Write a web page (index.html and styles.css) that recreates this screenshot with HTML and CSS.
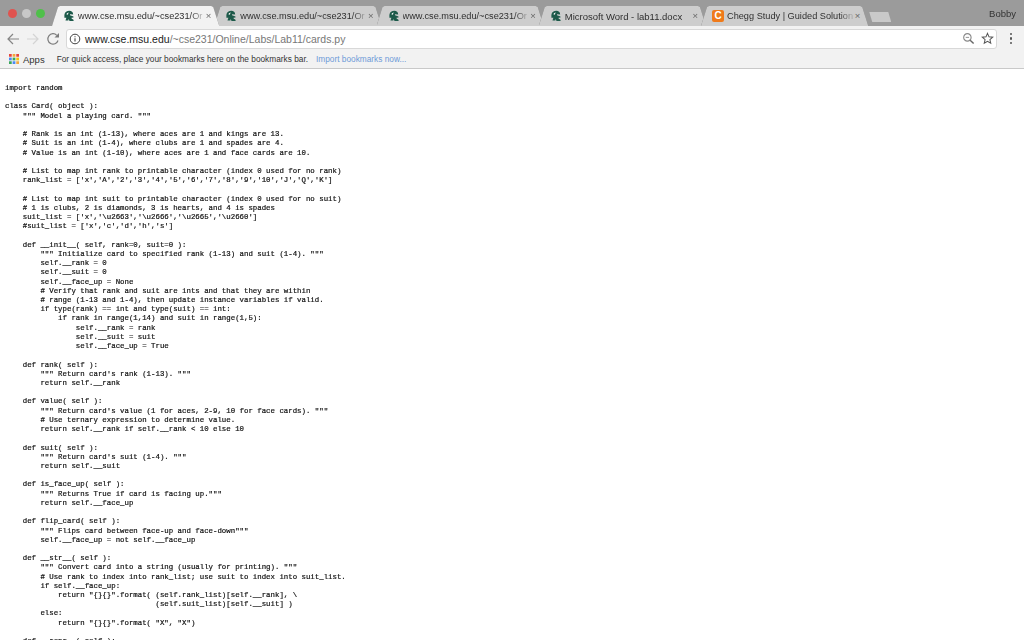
FILE: index.html
```html
<!DOCTYPE html>
<html lang="en">
<head>
<meta charset="utf-8">
<title>cards.py</title>
<link rel="stylesheet" href="styles.css">
</head>
<body>
<svg class="defs" width="0" height="0" aria-hidden="true">
  <symbol id="spartan" viewBox="0 0 16 16">
    <path fill="#1d5a4a" d="M8.5 1C5 1 2.6 3 2 5.6c-.4 1.7-.2 3.3.1 4.9.9-.2 1.7-.3 2.4-.1L3.300 14h3.900l.5-2.300.9 2.900H14.300l-.6-1.900-2.200-1.100.2-1.600 2 .3.300-1.700-3.700-1.200c-.8-.3-1.200-1-.9-1.800l4.200.3C13.600 2.800 11.300 1 8.500 1z"/>
    <path fill="#fff" d="M4.500 5.500c.8-1.300 2-2 3.400-2.100-.8.900-1.300 1.800-1.500 2.900-.7-.2-1.300-.5-1.900-.8z"/>
  </symbol>
</svg>
<div class="tabstrip">
  <div class="lights"><i class="light red"></i><i class="light grey"></i><i class="light green"></i></div>
  <div class="tabs">
    <div class="tab active"><div class="shape"><svg class="fav"><use href="#spartan"/></svg><span class="title fade">www.cse.msu.edu/~cse231/Or</span><span class="close">×</span></div></div>
    <div class="tab"><div class="shape"><svg class="fav"><use href="#spartan"/></svg><span class="title fade">www.cse.msu.edu/~cse231/Or</span><span class="close">×</span></div></div>
    <div class="tab"><div class="shape"><svg class="fav"><use href="#spartan"/></svg><span class="title fade">www.cse.msu.edu/~cse231/Or</span><span class="close">×</span></div></div>
    <div class="tab"><div class="shape"><svg class="fav"><use href="#spartan"/></svg><span class="title">Microsoft Word - lab11.docx</span><span class="close">×</span></div></div>
    <div class="tab"><div class="shape"><span class="chegg">C</span><span class="title fade">Chegg Study | Guided Solution</span><span class="close">×</span></div></div>
    <div class="newtab"></div>
  </div>
  <span class="user">Bobby</span>
</div>
<div class="toolbar">
  <svg class="nav" viewBox="0 0 16 16"><path d="M14 8H3M8 3 3 8l5 5" fill="none" stroke="#858585" stroke-width="1.200"/></svg>
  <svg class="nav" viewBox="0 0 16 16"><path d="M2 8h11M8 3l5 5-5 5" fill="none" stroke="#d4d4d4" stroke-width="1.200"/></svg>
  <svg class="nav" viewBox="0 0 16 16"><path d="M13 9.500A5.200 5.200 0 1 1 11.800 4.300" fill="none" stroke="#7c7c7c" stroke-width="1.200"/><path d="M9.500 6.500H14V2z" fill="#7c7c7c"/></svg>
  <div class="omnibox">
    <svg class="info" viewBox="0 0 12 12"><circle cx="6" cy="6" r="4.800" fill="none" stroke="#444" stroke-width="1"/><path d="M6 5.200v3.300M6 3.200v1.100" stroke="#444" stroke-width="1.100"/></svg>
    <span class="url"><b>www.cse.msu.edu</b>/~cse231/Online/Labs/Lab11/cards.py</span>
    <svg class="omni-icon" viewBox="0 0 14 14"><circle cx="5.800" cy="5.800" r="4" fill="none" stroke="#8a8a8a" stroke-width="1.200"/><path d="M4 5.800h3.600" stroke="#8a8a8a"/><path d="m8.800 8.800 3.700 3.700" stroke="#666" stroke-width="1.500"/></svg>
    <svg class="omni-icon" viewBox="0 0 14 14"><path d="m7 1.500 1.600 3.700 4 .4-3 2.600.9 3.900L7 10.100l-3.500 2 .9-3.900-3-2.600 4-.4z" fill="none" stroke="#555" stroke-width="1.100"/></svg>
  </div>
  <div class="menu"><i></i><i></i><i></i></div>
</div>
<div class="bookmarks">
  <svg class="apps" viewBox="0 0 11 11">
    <rect x="0" y="0" width="3" height="3" fill="#e8453c"/><rect x="4" y="0" width="3" height="3" fill="#f4a73a"/><rect x="8" y="0" width="3" height="3" fill="#e8453c"/>
    <rect x="0" y="4" width="3" height="3" fill="#4a8af4"/><rect x="4" y="4" width="3" height="3" fill="#3aa757"/><rect x="8" y="4" width="3" height="3" fill="#f4c20d"/>
    <rect x="0" y="8" width="3" height="3" fill="#3aa757"/><rect x="4" y="8" width="3" height="3" fill="#4a8af4"/><rect x="8" y="8" width="3" height="3" fill="#f4a73a"/>
  </svg>
  <span class="apps-label">Apps</span>
  <span class="hint">For quick access, place your bookmarks here on the bookmarks bar.</span>
  <span class="import">Import bookmarks now...</span>
</div>
<pre class="code">import random

class Card( object ):
    """ Model a playing card. """

    # Rank is an int (1-13), where aces are 1 and kings are 13.
    # Suit is an int (1-4), where clubs are 1 and spades are 4.
    # Value is an int (1-10), where aces are 1 and face cards are 10.

    # List to map int rank to printable character (index 0 used for no rank)
    rank_list = ['x','A','2','3','4','5','6','7','8','9','10','J','Q','K']

    # List to map int suit to printable character (index 0 used for no suit)
    # 1 is clubs, 2 is diamonds, 3 is hearts, and 4 is spades
    suit_list = ['x','\u2663','\u2666','\u2665','\u2660']
    #suit_list = ['x','c','d','h','s']

    def __init__( self, rank=0, suit=0 ):
        """ Initialize card to specified rank (1-13) and suit (1-4). """
        self.__rank = 0
        self.__suit = 0
        self.__face_up = None
        # Verify that rank and suit are ints and that they are within
        # range (1-13 and 1-4), then update instance variables if valid.
        if type(rank) == int and type(suit) == int:
            if rank in range(1,14) and suit in range(1,5):
                self.__rank = rank
                self.__suit = suit
                self.__face_up = True

    def rank( self ):
        """ Return card's rank (1-13). """
        return self.__rank

    def value( self ):
        """ Return card's value (1 for aces, 2-9, 10 for face cards). """
        # Use ternary expression to determine value.
        return self.__rank if self.__rank &lt; 10 else 10

    def suit( self ):
        """ Return card's suit (1-4). """
        return self.__suit

    def is_face_up( self ):
        """ Returns True if card is facing up."""
        return self.__face_up

    def flip_card( self ):
        """ Flips card between face-up and face-down"""
        self.__face_up = not self.__face_up

    def __str__( self ):
        """ Convert card into a string (usually for printing). """
        # Use rank to index into rank_list; use suit to index into suit_list.
        if self.__face_up:
            return "{}{}".format( (self.rank_list)[self.__rank], \
                                  (self.suit_list)[self.__suit] )
        else:
            return "{}{}".format( "X", "X")

    def __repr__( self ):</pre>
</body>
</html>
```
FILE: styles.css
```css
html, body {
  margin: 0;
  height: 640px;
  overflow: hidden;
  background: #fff;
  font-family: "Liberation Sans", Arial, sans-serif;
}
.defs { position: absolute; }

.tabstrip {
  height: 26px;
  background: #9b9b9b;
  display: flex;
  position: relative;
}
.lights {
  width: 52px;
  display: flex;
  align-items: center;
  gap: 5px;
  padding: 0 0 0 8px;
  height: 26px;
  box-sizing: border-box;
  flex: none;
}
.light { width: 9px; height: 9px; border-radius: 50%; flex: none; }
.red { background: #e0534f; }
.grey { background: #c8c8c8; }
.green { background: #4fc04a; }

.tabs { display: flex; padding-top: 6px; flex: 1; min-width: 0; }
.tab {
  width: 167.250px;
  height: 20px;
  margin-right: -5px;
  flex: none;
  filter: drop-shadow(0 0 .5px #6f6f6f);
}
.shape {
  height: 20px;
  padding: 0 8px 0 11px;
  box-sizing: border-box;
  background: #cdcdcd;
  display: flex;
  align-items: center;
  clip-path: polygon(0 100%, 6px 1px, 8px 0, calc(100% - 8px) 0, calc(100% - 6px) 1px, 100% 100%);
}
.tab.active { position: relative; z-index: 2; }
.active .shape { background: #f2f2f2; }
.fav { width: 12px; height: 14px; flex: none; margin-right: 3px; }
.chegg {
  width: 12px; height: 12px; flex: none; margin-right: 3px;
  background: #ef7a1a; color: #fff; border-radius: 2px;
  font: 700 10px/12px "Liberation Sans", sans-serif; text-align: center;
}
.title {
  flex: 1; min-width: 0;
  font-size: 9.500px;
  color: #2f2f2f;
  white-space: nowrap;
}
.fade {
  font-size: 9.200px;
  -webkit-mask-image: linear-gradient(90deg, #000 88%, rgba(0,0,0,.25) 97%);
  mask-image: linear-gradient(90deg, #000 88%, rgba(0,0,0,.25) 97%);
}
.close { font-size: 9.500px; color: #666; line-height: 12px; }
.newtab {
  width: 22px; height: 10px; margin: 6px 0 0 6px; flex: none;
  background: #c9c9c9;
  clip-path: polygon(0 0, 19px 0, 100% 100%, 3px 100%);
}
.user {
  position: absolute; right: 8px; top: 8px;
  font-size: 9.500px; color: #333;
}

.toolbar {
  height: 25px;
  background: #f2f2f2;
  display: flex;
  align-items: center;
  padding: 1px 2px 0 5px;
  box-sizing: border-box;
  gap: 3px;
  border-top: 1px solid #a8a8a8;
  margin-top: -1px;
}
.nav { width: 16px; height: 16px; flex: none; margin-right: 1px; }
.omnibox {
  flex: 1; height: 20px; margin-left: 1px;
  background: #fff;
  border: 1px solid #d8d8d8;
  border-radius: 3px;
  display: flex;
  align-items: center;
  padding: 0 2px 0 2px;
  gap: 6px;
  box-sizing: border-box;
}
.info { width: 12px; height: 12px; flex: none; }
.url { flex: 1; font-size: 10.500px; color: #777; white-space: nowrap; margin-left: -2px; }
.url b { font-weight: 400; color: #222; }
.omni-icon { width: 13px; height: 13px; flex: none; }
.menu { width: 22px; display: flex; flex-direction: column; align-items: center; gap: 2px; flex: none; }
.menu i { width: 2.500px; height: 2.500px; border-radius: 50%; background: #555; }

.bookmarks {
  height: 19px;
  box-sizing: border-box;
  background: #f2f2f2;
  border-bottom: 1px solid #c9c9c9;
  display: flex;
  align-items: center;
  padding: 0 0 0 9px;
  color: #333;
  white-space: nowrap;
}
.apps { width: 10px; height: 10px; flex: none; margin-right: 4px; }
.apps-label { font-size: 9.500px; margin-right: 12px; }
.hint { margin-right: 8px; font-size: 8.300px; }
.import { color: #6e9bd8; font-size: 8.300px; }

.code {
  margin: 0;
  padding: 15px 0 0 5px;
  font-family: "Liberation Mono", "Courier New", monospace;
  font-size: 7.380px;
  line-height: 9.220px;
  color: #111;
  -webkit-text-stroke: .2px #111;
  filter: blur(.25px);
}
```
